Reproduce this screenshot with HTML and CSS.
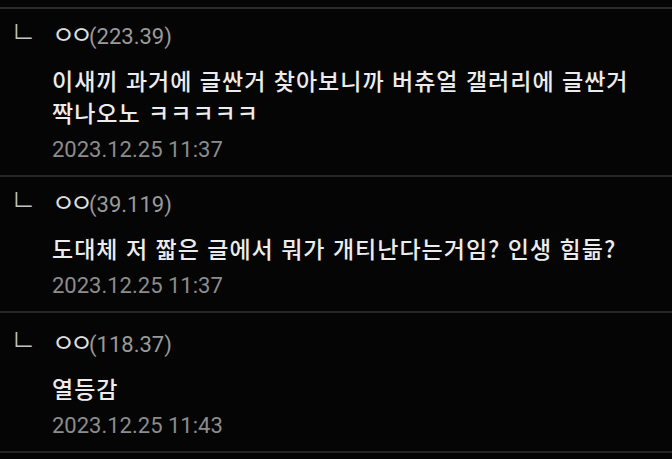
FILE: index.html
```html
<!DOCTYPE html>
<html lang="ko">
<head>
    <meta charset="UTF-8">
    <meta name="viewport" content="width=device-width, initial-scale=1.0">
    <title>댓글</title>
    <link rel="stylesheet" href="styles.css">
</head>
<body>

<ul class="comments">
    <li class="comment">
        <span class="reply-mark">ㄴ</span>
        <div class="comment-body">
            <div class="author"><span class="nick">ㅇㅇ</span><span class="ip">(223.39)</span></div>
            <p class="text">이새끼 과거에 글싼거 찾아보니까 버츄얼 갤러리에 글싼거<br>짝나오노 ㅋㅋㅋㅋㅋ</p>
            <div class="date">2023.12.25 11:37</div>
        </div>
    </li>
    <li class="comment">
        <span class="reply-mark">ㄴ</span>
        <div class="comment-body">
            <div class="author"><span class="nick">ㅇㅇ</span><span class="ip">(39.119)</span></div>
            <p class="text">도대체 저 짧은 글에서 뭐가 개티난다는거임? 인생 힘듦?</p>
            <div class="date">2023.12.25 11:37</div>
        </div>
    </li>
    <li class="comment">
        <span class="reply-mark">ㄴ</span>
        <div class="comment-body">
            <div class="author"><span class="nick">ㅇㅇ</span><span class="ip">(118.37)</span></div>
            <p class="text">열등감</p>
            <div class="date">2023.12.25 11:43</div>
        </div>
    </li>
</ul>

</body>
</html>
```

FILE: styles.css
```css
html, body {
    background-color: #050505;
}
body {
    margin: 0;
    padding-top: 7px;
    font-family: Roboto, "Noto Sans CJK KR", sans-serif;
    color: #e8e8e8;
}
.comments {
    list-style: none;
    margin: 0;
    padding: 0;
    border-top: 2px solid #2c2c2c;
}
.comment {
    display: flex;
    border-bottom: 2px solid #262626;
    padding: 13px 0 10px 10px;
}
.comment:last-child {
    padding-top: 17px;
}
.reply-mark {
    width: 42px;
    height: 30px;
    font-family: "Noto Sans CJK KR", sans-serif;
    font-size: 32px;
    font-weight: 300;
    line-height: 15px;
    color: #c4c4c4;
    transform: scaleX(0.9);
    transform-origin: left top;
}
.comment-body {
    flex: 1;
}
.author {
    height: 30px;
    font-size: 22px;
    line-height: 30px;
    color: #9a9a9a;
}
.nick {
    font-family: "Noto Sans CJK KR", sans-serif;
    font-size: 25px;
    line-height: 20px;
    letter-spacing: -5px;
    margin-right: 1px;
    color: #e0e0e0;
}
.text {
    margin: 12px 0 7px;
    font-family: "Noto Sans CJK KR", sans-serif;
    font-size: 23px;
    font-weight: 500;
    letter-spacing: 1px;
    line-height: 32px;
    color: #ececec;
}
.date {
    font-size: 22px;
    line-height: 30px;
    color: #8c8c8c;
}
```
